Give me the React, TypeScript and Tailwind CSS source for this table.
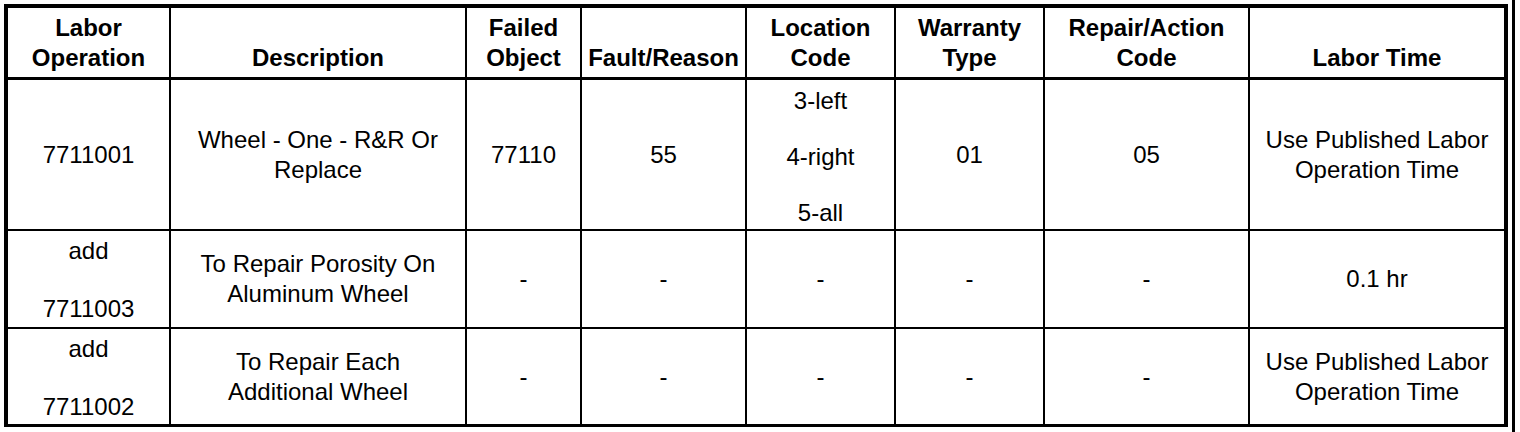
const cols = 'grid-cols-[163px_296px_115px_165px_149px_149px_205px_254px]'

const head = [
  ['Labor', 'Operation'],
  ['Description'],
  ['Failed', 'Object'],
  ['Fault/Reason'],
  ['Location', 'Code'],
  ['Warranty', 'Type'],
  ['Repair/Action', 'Code'],
  ['Labor Time'],
]

type Cell = string[] | { stack: string[]; wide?: boolean }

const rows: { h: string; cells: Cell[] }[] = [
  {
    h: 'h-[151px] border-b-2',
    cells: [
      ['7711001'],
      ['Wheel - One - R&R Or', 'Replace'],
      ['77110'],
      ['55'],
      { stack: ['3-left', '4-right', '5-all'] },
      ['01'],
      ['05'],
      ['Use Published Labor', 'Operation Time'],
    ],
  },
  {
    h: 'h-[98px] border-b-2',
    cells: [
      { stack: ['add', '7711003'], wide: true },
      ['To Repair Porosity On', 'Aluminum Wheel'],
      ['-'],
      ['-'],
      ['-'],
      ['-'],
      ['-'],
      ['0.1 hr'],
    ],
  },
  {
    h: 'h-[95px]',
    cells: [
      { stack: ['add', '7711002'], wide: true },
      ['To Repair Each', 'Additional Wheel'],
      ['-'],
      ['-'],
      ['-'],
      ['-'],
      ['-'],
      ['Use Published Labor', 'Operation Time'],
    ],
  },
]

function Body({ cell }: { cell: Cell }) {
  if (Array.isArray(cell)) {
    return (
      <div className="flex flex-col items-center">
        {cell.map((l) => (
          <span key={l}>{l}</span>
        ))}
      </div>
    )
  }
  return (
    <div className={`flex flex-col items-center ${cell.wide ? 'gap-[28px] pt-[2px]' : 'gap-[26px] pt-1'}`}>
      {cell.stack.map((l) => (
        <span key={l}>{l}</span>
      ))}
    </div>
  )
}

export default function App() {
  return (
    <div className="flex h-[432px] w-[1520px] bg-white text-black font-['Liberation_Sans',Arial,Helvetica,sans-serif]">
      <div className="ml-1 mt-1 h-[423px] w-[1504px] border-4 border-b-[3px] border-black">
        <div className={`grid ${cols} h-[72px] border-b-[3px] border-black text-[24px] font-bold leading-[30px]`}>
          {head.map((lines, i) => (
            <div
              key={i}
              className={`flex flex-col items-center justify-end pb-1 text-center ${i < 7 ? 'border-r-2 border-black' : ''}`}
            >
              {lines.map((l) => (
                <span key={l}>{l}</span>
              ))}
            </div>
          ))}
        </div>
        {rows.map((r, ri) => (
          <div key={ri} className={`grid ${cols} ${r.h} border-black text-[24px] leading-[30px]`}>
            {r.cells.map((c, i) => (
              <div
                key={i}
                className={`flex items-center justify-center text-center ${i < 7 ? 'border-r-2 border-black' : ''}`}
              >
                <Body cell={c} />
              </div>
            ))}
          </div>
        ))}
      </div>
      <div className="ml-1 h-full w-[3px] bg-black" />
    </div>
  )
}
